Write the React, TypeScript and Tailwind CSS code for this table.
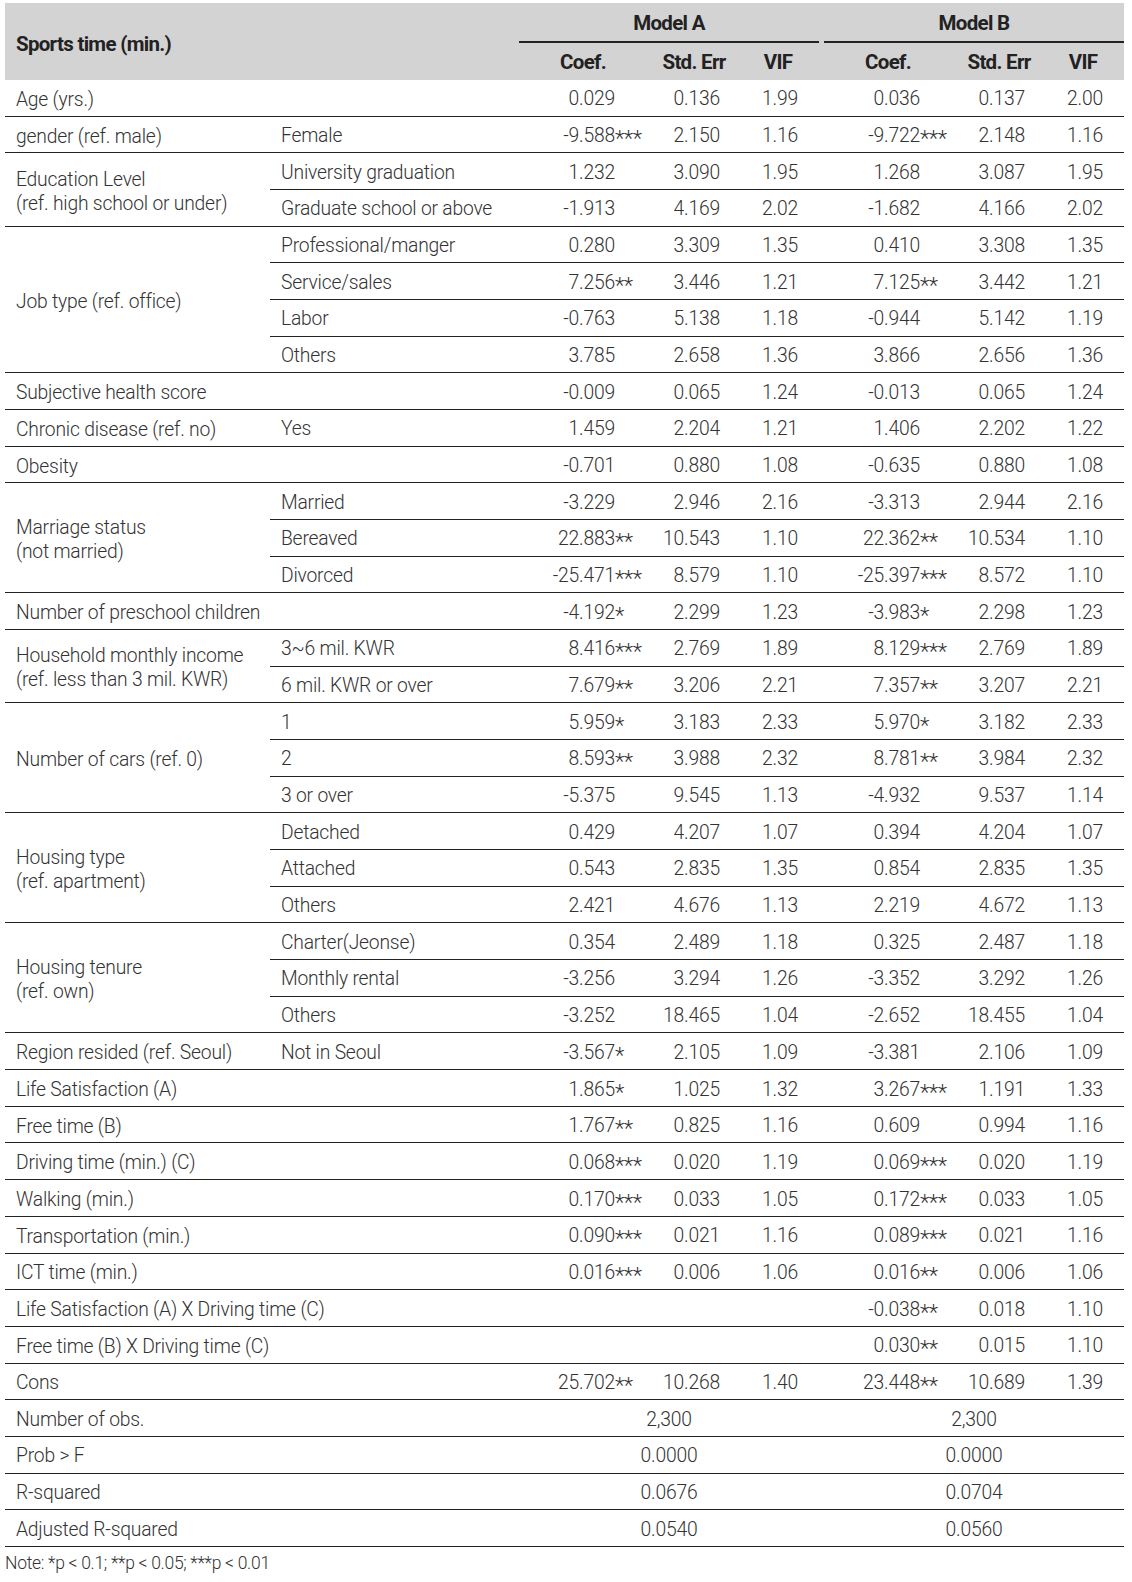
import React from "react";

type Vals = [string, string, string] | null;
type Row = { sub?: string; a: Vals; b: Vals };
type Group = { label: string[]; rows: Row[] };

const groups: Group[] = [
  { label: ["Age (yrs.)"], rows: [{ a: ["0.029", "0.136", "1.99"], b: ["0.036", "0.137", "2.00"] }] },
  { label: ["gender (ref. male)"], rows: [{ sub: "Female", a: ["-9.588***", "2.150", "1.16"], b: ["-9.722***", "2.148", "1.16"] }] },
  {
    label: ["Education Level", "(ref. high school or under)"],
    rows: [
      { sub: "University graduation", a: ["1.232", "3.090", "1.95"], b: ["1.268", "3.087", "1.95"] },
      { sub: "Graduate school or above", a: ["-1.913", "4.169", "2.02"], b: ["-1.682", "4.166", "2.02"] },
    ],
  },
  {
    label: ["Job type (ref. office)"],
    rows: [
      { sub: "Professional/manger", a: ["0.280", "3.309", "1.35"], b: ["0.410", "3.308", "1.35"] },
      { sub: "Service/sales", a: ["7.256**", "3.446", "1.21"], b: ["7.125**", "3.442", "1.21"] },
      { sub: "Labor", a: ["-0.763", "5.138", "1.18"], b: ["-0.944", "5.142", "1.19"] },
      { sub: "Others", a: ["3.785", "2.658", "1.36"], b: ["3.866", "2.656", "1.36"] },
    ],
  },
  { label: ["Subjective health score"], rows: [{ a: ["-0.009", "0.065", "1.24"], b: ["-0.013", "0.065", "1.24"] }] },
  { label: ["Chronic disease (ref. no)"], rows: [{ sub: "Yes", a: ["1.459", "2.204", "1.21"], b: ["1.406", "2.202", "1.22"] }] },
  { label: ["Obesity"], rows: [{ a: ["-0.701", "0.880", "1.08"], b: ["-0.635", "0.880", "1.08"] }] },
  {
    label: ["Marriage status", "(not married)"],
    rows: [
      { sub: "Married", a: ["-3.229", "2.946", "2.16"], b: ["-3.313", "2.944", "2.16"] },
      { sub: "Bereaved", a: ["22.883**", "10.543", "1.10"], b: ["22.362**", "10.534", "1.10"] },
      { sub: "Divorced", a: ["-25.471***", "8.579", "1.10"], b: ["-25.397***", "8.572", "1.10"] },
    ],
  },
  { label: ["Number of preschool children"], rows: [{ a: ["-4.192*", "2.299", "1.23"], b: ["-3.983*", "2.298", "1.23"] }] },
  {
    label: ["Household monthly income", "(ref. less than 3 mil. KWR)"],
    rows: [
      { sub: "3~6 mil. KWR", a: ["8.416***", "2.769", "1.89"], b: ["8.129***", "2.769", "1.89"] },
      { sub: "6 mil. KWR or over", a: ["7.679**", "3.206", "2.21"], b: ["7.357**", "3.207", "2.21"] },
    ],
  },
  {
    label: ["Number of cars (ref. 0)"],
    rows: [
      { sub: "1", a: ["5.959*", "3.183", "2.33"], b: ["5.970*", "3.182", "2.33"] },
      { sub: "2", a: ["8.593**", "3.988", "2.32"], b: ["8.781**", "3.984", "2.32"] },
      { sub: "3 or over", a: ["-5.375", "9.545", "1.13"], b: ["-4.932", "9.537", "1.14"] },
    ],
  },
  {
    label: ["Housing type", "(ref. apartment)"],
    rows: [
      { sub: "Detached", a: ["0.429", "4.207", "1.07"], b: ["0.394", "4.204", "1.07"] },
      { sub: "Attached", a: ["0.543", "2.835", "1.35"], b: ["0.854", "2.835", "1.35"] },
      { sub: "Others", a: ["2.421", "4.676", "1.13"], b: ["2.219", "4.672", "1.13"] },
    ],
  },
  {
    label: ["Housing tenure", "(ref. own)"],
    rows: [
      { sub: "Charter(Jeonse)", a: ["0.354", "2.489", "1.18"], b: ["0.325", "2.487", "1.18"] },
      { sub: "Monthly rental", a: ["-3.256", "3.294", "1.26"], b: ["-3.352", "3.292", "1.26"] },
      { sub: "Others", a: ["-3.252", "18.465", "1.04"], b: ["-2.652", "18.455", "1.04"] },
    ],
  },
  { label: ["Region resided (ref. Seoul)"], rows: [{ sub: "Not in Seoul", a: ["-3.567*", "2.105", "1.09"], b: ["-3.381", "2.106", "1.09"] }] },
  { label: ["Life Satisfaction (A)"], rows: [{ a: ["1.865*", "1.025", "1.32"], b: ["3.267***", "1.191", "1.33"] }] },
  { label: ["Free time (B)"], rows: [{ a: ["1.767**", "0.825", "1.16"], b: ["0.609", "0.994", "1.16"] }] },
  { label: ["Driving time (min.) (C)"], rows: [{ a: ["0.068***", "0.020", "1.19"], b: ["0.069***", "0.020", "1.19"] }] },
  { label: ["Walking (min.)"], rows: [{ a: ["0.170***", "0.033", "1.05"], b: ["0.172***", "0.033", "1.05"] }] },
  { label: ["Transportation (min.)"], rows: [{ a: ["0.090***", "0.021", "1.16"], b: ["0.089***", "0.021", "1.16"] }] },
  { label: ["ICT time (min.)"], rows: [{ a: ["0.016***", "0.006", "1.06"], b: ["0.016**", "0.006", "1.06"] }] },
  { label: ["Life Satisfaction (A) X Driving time (C)"], rows: [{ a: null, b: ["-0.038**", "0.018", "1.10"] }] },
  { label: ["Free time (B) X Driving time (C)"], rows: [{ a: null, b: ["0.030**", "0.015", "1.10"] }] },
  { label: ["Cons"], rows: [{ a: ["25.702**", "10.268", "1.40"], b: ["23.448**", "10.689", "1.39"] }] },
];

const stats: [string, string, string][] = [
  ["Number of obs.", "2,300", "2,300"],
  ["Prob > F", "0.0000", "0.0000"],
  ["R-squared", "0.0676", "0.0704"],
  ["Adjusted R-squared", "0.0540", "0.0560"],
];

// one table row is 36.675px tall, its bottom rule included
const Coef = ({ v }: { v: string }) => {
  const m = v.match(/^([^*]*)(\**)$/);
  const num = m ? m[1] : v;
  const stars = m ? m[2] : "";
  return (
    <span className="relative">
      {num}
      {stars && <span className="absolute left-full top-[-2px] text-[22px] tracking-[-0.5px]">{stars}</span>}
    </span>
  );
};

const ModelCells = ({ v }: { v: Vals }) => (
  <div className="grid w-[300px] grid-cols-[128px_94px_78px]">
    {v && (
      <>
        <div className="pr-[32px] text-right">
          <Coef v={v[0]} />
        </div>
        <div className="pr-[21px] text-right">{v[1]}</div>
        <div className="pr-[21px] text-right">{v[2]}</div>
      </>
    )}
  </div>
);

export default function App() {
  return (
    <div
      className="min-h-screen bg-white pl-[5px] pt-[3px] text-[19.3px] font-light tracking-[-0.2px] text-[#333]"
      style={{ fontFamily: "Roboto, 'Liberation Sans', sans-serif" }}
    >
      <div className="w-[1119px]">
        {/* Header */}
        <div className="flex h-[77px] bg-[#d3d3d3] text-[20.5px] font-bold tracking-[-0.7px] text-[#222]">
          <div className="flex w-[514px] items-center pl-[11px] pt-[5px]">Sports time (min.)</div>
          <div className="flex flex-col">
            <div className="flex h-[40px]">
              <div className="flex w-[300px] items-center justify-center border-b-2 border-[#222] pt-[3px]">
                Model A
              </div>
              <div className="w-[5px]" />
              <div className="flex w-[300px] items-center justify-center border-b-2 border-[#222] pt-[3px]">
                Model B
              </div>
            </div>
            <div className="flex h-[37px] items-center pt-[2px]">
              {["A", "B"].map((k, i) => (
                <React.Fragment key={k}>
                  {i === 1 && <div className="w-[5px]" />}
                  <div className="grid w-[300px] grid-cols-[128px_94px_74px_4px] text-center">
                    <div>Coef.</div>
                    <div>Std. Err</div>
                    <div>VIF</div>
                  </div>
                </React.Fragment>
              ))}
            </div>
          </div>
        </div>

        {/* Body */}
        {groups.map((g, gi) => {
          const wide = g.rows.length === 1 && !g.rows[0].sub;
          return (
            <div key={gi} className="flex border-b border-[#222]">
              <div
                className={`flex w-[265px] items-center pl-[11px] pt-[4px] leading-[24px] ${wide ? "whitespace-nowrap" : ""}`}
              >
                <div>
                  {g.label.map((l, li) => (
                    <div key={li}>{l}</div>
                  ))}
                </div>
              </div>
              <div className="flex flex-col">
                {g.rows.map((r, ri) => {
                  const last = ri === g.rows.length - 1;
                  return (
                    <div
                      key={ri}
                      className={`flex items-center pt-[4px] ${last ? "h-[35.675px]" : "h-[36.675px] border-b border-[#222]"}`}
                    >
                      <div className="w-[249px] pl-[11px]">{r.sub}</div>
                      <ModelCells v={r.a} />
                      <div className="w-[5px]" />
                      <ModelCells v={r.b} />
                    </div>
                  );
                })}
              </div>
            </div>
          );
        })}

        {stats.map(([l, a, b]) => (
          <div key={l} className="flex h-[36.675px] items-center border-b border-[#222] pt-[4px]">
            <div className="w-[514px] pl-[11px]">{l}</div>
            <div className="w-[300px] text-center">{a}</div>
            <div className="w-[5px]" />
            <div className="w-[300px] text-center">{b}</div>
          </div>
        ))}

        <div className="pt-[3px] text-[17.5px] tracking-[-0.3px]">Note: *p &lt; 0.1; **p &lt; 0.05; ***p &lt; 0.01</div>
      </div>
    </div>
  );
}
